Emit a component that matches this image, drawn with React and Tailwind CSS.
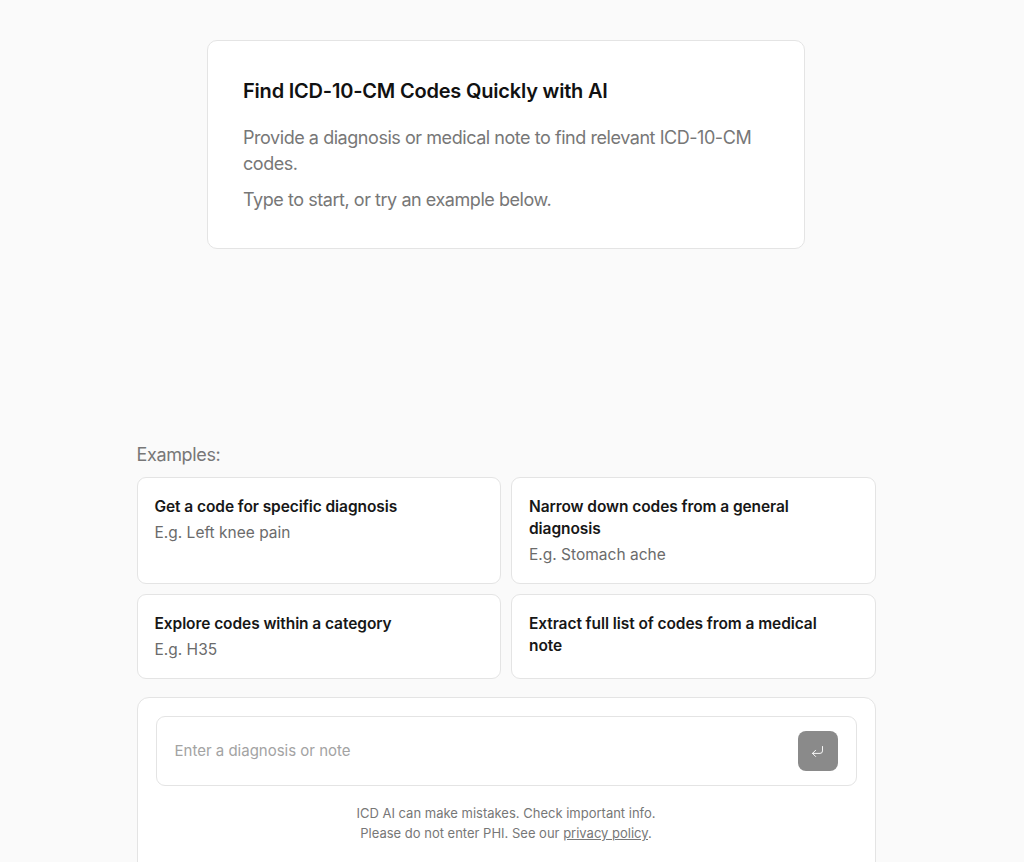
import React, { useState } from "react";
import { CornerDownLeft } from "lucide-react";

const examples = [
  {
    title: "Get a code for specific diagnosis",
    sample: "E.g. Left knee pain",
  },
  {
    title: "Narrow down codes from a general diagnosis",
    sample: "E.g. Stomach ache",
  },
  {
    title: "Explore codes within a category",
    sample: "E.g. H35",
  },
  {
    title: "Extract full list of codes from a medical note",
    sample: null,
  },
];

const ExampleCard = ({ title, sample, onPick }) => {
  return (
    <div
      role="button"
      onClick={onPick}
      className="flex flex-col items-start bg-white border border-[#e4e4e4] rounded-[9px] pl-[17px] pr-[18px] pt-[18px] pb-[17px] cursor-pointer"
    >
      <div className="text-[15.5px] leading-[22px] font-semibold text-[#171717] pr-6 tracking-[-0.005em]">
        {title}
      </div>
      {sample && (
        <div className="mt-1 text-[15.5px] leading-[22px] text-[#6b6b6b]">
          {sample}
        </div>
      )}
    </div>
  );
};

const App = () => {
  const [query, setQuery] = useState("");

  return (
    <div
      className="h-[862px] overflow-hidden bg-[#fafafa] text-[#171717]"
      style={{ fontFamily: "Inter, 'Noto Sans', sans-serif" }}
    >
      <div className="w-[1012px] h-full flex flex-col">
        <div className="w-[598px] mx-auto mt-10 bg-white border border-[#e4e4e4] rounded-[10px] pl-[35px] pr-8 pt-[36px] pb-[35px]">
          <h1 className="text-[20px] leading-7 font-semibold text-[#111] tracking-[-0.01em]">
            Find ICD-10-CM Codes Quickly with AI
          </h1>
          <p className="mt-[20px] text-[18px] leading-[26px] text-[#777] tracking-[-0.025em]">
            Provide a diagnosis or medical note to find relevant ICD-10-CM
            codes.
          </p>
          <p className="mt-[10px] text-[18px] leading-[26px] text-[#777] tracking-[-0.025em]">
            Type to start, or try an example below.
          </p>
        </div>

        <div className="flex-1" />

        <div className="w-[739px] mx-auto">
          <div className="text-[18px] leading-[26px] text-[#777] mb-[9px] tracking-[-0.02em]">
            Examples:
          </div>
          <div className="grid grid-cols-2 gap-[10px]">
            {examples.map((ex) => (
              <ExampleCard
                key={ex.title}
                title={ex.title}
                sample={ex.sample}
                onPick={() => setQuery(ex.sample ? ex.sample.slice(5) : "")}
              />
            ))}
          </div>

          <div className="mt-[18px] bg-white border border-[#e4e4e4] rounded-t-[12px] px-[18px] pt-[18px] pb-10 -mb-[22px]">
            <div className="flex items-center h-[70px] border border-[#e4e4e4] rounded-[9px] pl-[18px] pr-[18px]">
              <input
                type="text"
                value={query}
                onChange={(e) => setQuery(e.target.value)}
                placeholder="Enter a diagnosis or note"
                className="flex-1 bg-transparent outline-none text-[15px] text-[#171717] placeholder:text-[#a3a3a3]"
              />
              <button
                type="button"
                className="w-10 h-10 rounded-lg bg-[#8a8a8a] flex items-center justify-center text-white"
              >
                <CornerDownLeft size={15} strokeWidth={1.5} />
              </button>
            </div>
            <div className="mt-[17px] text-center text-[13px] leading-5 text-[#777]">
              <div>ICD AI can make mistakes. Check important info.</div>
              <div>
                Please do not enter PHI. See our{" "}
                <a href="#" className="underline">
                  privacy policy
                </a>
                .
              </div>
            </div>
          </div>
        </div>
      </div>
    </div>
  );
};

export default App;
